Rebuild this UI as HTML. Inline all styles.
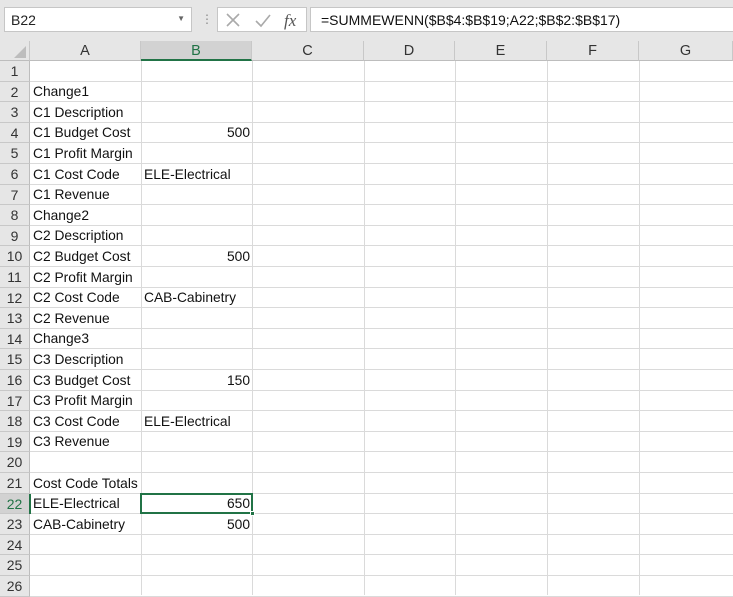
<!DOCTYPE html>
<html><head><style>
*{margin:0;padding:0;box-sizing:border-box}
body{width:733px;height:595px;overflow:hidden;background:#fff;font-family:"Liberation Sans",sans-serif;position:relative}
.top{position:absolute;left:0;top:0;width:733px;height:41px;background:#e6e6e6}
.nb{position:absolute;left:4px;top:7px;width:188px;height:25px;background:#fff;border:1px solid #c6c6c6;font-size:14px;padding:4px 6px;color:#222}
.fb{position:absolute;left:217px;top:7px;width:90px;height:25px;background:#fff;border:1px solid #c6c6c6}
.fx{position:absolute;left:310px;top:7px;width:430px;height:25px;background:#fff;border:1px solid #c6c6c6;font-size:14px;padding:4px 10px;color:#111}
.hdr{position:absolute;top:41px;height:20px;background:#e6e6e6;border-right:1px solid #c8c8c8;border-bottom:1px solid #bdbdbd;font-size:14.5px;text-align:center;line-height:20px;color:#333}
.rh{position:absolute;left:0;width:30px;background:#e6e6e6;border-bottom:1px solid #c8c8c8;border-right:1px solid #bdbdbd;font-size:14px;text-align:center;color:#333}
.vl{position:absolute;top:61px;width:1px;height:534px;background:#dadada}
.hl{position:absolute;left:30px;width:703px;height:1px;background:#dadada}
.t{position:absolute;font-size:13.8px;color:#111;white-space:nowrap}
</style></head><body>
<div class="top"></div>
<div class="nb">B22<span style="position:absolute;right:6px;top:6px;font-size:8px;color:#666">▼</span></div>
<div style="position:absolute;left:201px;top:12px;color:#888;font-size:12px">⋮</div>
<div class="fb">
<svg width="90" height="25" style="position:absolute;left:0;top:0"><path d="M9 6l12 12M21 6l-12 12" stroke="#aaa" stroke-width="1.6"/><path d="M38 13l5 5 9-11" stroke="#aaa" stroke-width="1.6" fill="none"/><text x="66" y="18" font-family="Liberation Serif" font-style="italic" font-size="17" fill="#555">fx</text></svg>
</div>
<div class="fx">=SUMMEWENN($B$4:$B$19;A22;$B$2:$B$17)</div>
<div class="hdr" style="left:0;width:30px"><svg width="30" height="20"><path d="M26 5v12H14z" fill="#bdbdbd"/></svg></div>
<div class="hdr" style="left:30px;width:111px">A</div>
<div class="hdr" style="left:141px;width:111px;background:#d2d2d2;color:#217346;border-bottom:2px solid #217346">B</div>
<div class="hdr" style="left:252px;width:112px">C</div>
<div class="hdr" style="left:364px;width:91px">D</div>
<div class="hdr" style="left:455px;width:92px">E</div>
<div class="hdr" style="left:547px;width:92px">F</div>
<div class="hdr" style="left:639px;width:94px">G</div>
<div id="g"></div>
<script>
var rows=["","Change1","C1 Description","C1 Budget Cost","C1 Profit Margin","C1 Cost Code","C1 Revenue","Change2","C2 Description","C2 Budget Cost","C2 Profit Margin","C2 Cost Code","C2 Revenue","Change3","C3 Description","C3 Budget Cost","C3 Profit Margin","C3 Cost Code","C3 Revenue","","Cost Code Totals","ELE-Electrical","CAB-Cabinetry","","",""];
var b={4:"500",6:"ELE-Electrical",10:"500",12:"CAB-Cabinetry",16:"150",18:"ELE-Electrical",22:"650",23:"500"};
var h="",H=20.6;
[141,252,364,455,547,639].forEach(function(x){h+='<div class="vl" style="left:'+x+'px"></div>'});
for(var i=1;i<=26;i++){var y=61+(i-1)*H;
h+='<div class="hl" style="top:'+(y+H-1)+'px"></div>';
h+='<div class="rh" style="top:'+y+'px;height:'+H+'px;line-height:'+H+'px;'+(i==22?'background:#d2d2d2;color:#217346;':'')+'">'+i+'</div>';
h+='<div class="t" style="left:33px;top:'+(y+2.5)+'px">'+rows[i-1]+'</div>';
if(b[i]){var num=/^\d+$/.test(b[i]);h+='<div class="t" style="'+(num?'left:141px;width:109px;text-align:right;':'left:144px;')+'top:'+(y+2.5)+'px">'+b[i]+'</div>';}
}
var y22=61+21*H;
h+='<div style="position:absolute;left:140px;top:'+(y22-1)+'px;width:113px;height:'+(H+1)+'px;border:2px solid #217346"></div>';
h+='<div style="position:absolute;left:250px;top:'+(y22+H-3)+'px;width:5px;height:5px;background:#217346;border:1px solid #fff"></div>';
h+='<div style="position:absolute;left:29px;top:'+y22+'px;width:2px;height:'+H+'px;background:#217346"></div>';
document.getElementById("g").innerHTML=h;
</script>
</body></html>
